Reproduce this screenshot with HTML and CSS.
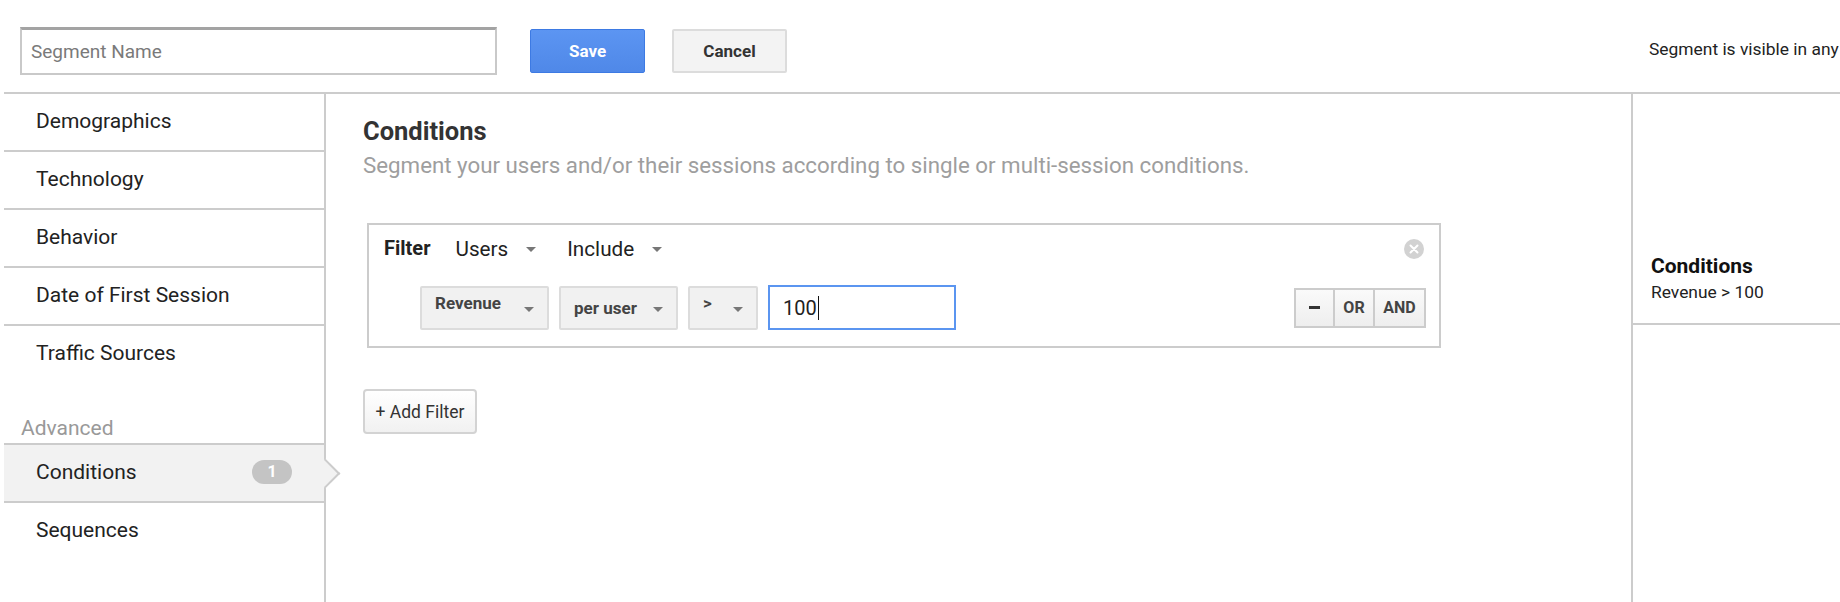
FILE: index.html
```html
<!DOCTYPE html>
<html lang="en">
<head>
  <meta charset="UTF-8">
  <title>Segment editor</title>
  <link rel="stylesheet" href="styles.css">
</head>
<body>
  <header class="topbar">
    <input class="segment-name" type="text" placeholder="Segment Name">
    <button class="btn btn-save">Save</button>
    <button class="btn btn-cancel">Cancel</button>
    <div class="visibility">Segment is visible in any</div>
  </header>

  <div class="layout">
    <!-- левое меню -->
    <nav class="sidebar">
      <div class="nav-item">Demographics</div>
      <div class="nav-item">Technology</div>
      <div class="nav-item">Behavior</div>
      <div class="nav-item">Date of First Session</div>
      <div class="nav-item last">Traffic Sources</div>
      <div class="nav-label">Advanced</div>
      <div class="nav-item active">Conditions <span class="badge">1</span></div>
      <div class="nav-item last">Sequences</div>
    </nav>

    <!-- условия -->
    <main class="content">
      <h2 class="title">Conditions</h2>
      <p class="subtitle">Segment your users and/or their sessions according to single or multi-session conditions.</p>

      <div class="filter">
        <div class="filter-head">
          <b class="filter-label">Filter</b>
          <span class="dropdown">Users <i class="caret"></i></span>
          <span class="dropdown">Include <i class="caret"></i></span>
          <svg class="remove" width="20" height="20" viewBox="0 0 20 20">
            <circle cx="10" cy="10" r="10" fill="#d2d2d2"/>
            <path d="M6.5 6.5 L13.5 13.5 M13.5 6.5 L6.5 13.5" stroke="#fff" stroke-width="2" stroke-linecap="round"/>
          </svg>
        </div>
        <div class="filter-row">
          <span class="select sel-revenue"><span class="up">Revenue</span> <i class="caret"></i></span>
          <span class="select sel-per">per user <i class="caret"></i></span>
          <span class="select sel-op"><span class="up">&gt;</span> <i class="caret"></i></span>
          <div class="value">100<span class="cursor"></span></div>
          <div class="logic">
            <span class="logic-btn minus"><i></i></span>
            <span class="logic-btn or">OR</span>
            <span class="logic-btn and">AND</span>
          </div>
        </div>
      </div>

      <button class="add-filter">+ Add Filter</button>
    </main>

    <!-- сводка -->
    <aside class="summary">
      <div class="summary-block">
        <div class="summary-title">Conditions</div>
        <div class="summary-text">Revenue &gt; 100</div>
      </div>
    </aside>
  </div>
</body>
</html>
```

FILE: styles.css
```css
body {
  margin: 0;
  font-family: Roboto, "Liberation Sans", sans-serif;
  color: #222;
  background: #fff;
  overflow: hidden;
  height: 602px;
}
.topbar {
  height: 82px;
  padding-top: 10px;
  display: flex;
  align-items: center;
  white-space: nowrap;
  overflow: hidden;
}
.topbar > * {
  flex-shrink: 0;
}
.segment-name {
  margin-left: 20px;
  width: 477px;
  height: 48px;
  box-sizing: border-box;
  border: 2px solid #c9c9c9;
  border-top: 3px solid #a3a3a3;
  padding: 0 9px;
  font-family: inherit;
  font-size: 19px;
  color: #333;
  outline: none;
}
.segment-name::placeholder {
  color: #7a7a7a;
}
.btn {
  width: 115px;
  height: 44px;
  border-radius: 2px;
  font-family: inherit;
  font-weight: bold;
  font-size: 17px;
  cursor: pointer;
}
.btn-save {
  margin-left: 33px;
  background: linear-gradient(#5c95f2, #4f88e8);
  border: 1px solid #3d7ae3;
  color: #fff;
}
.btn-cancel {
  margin-left: 27px;
  background: #f3f3f3;
  border: 2px solid #dcdcdc;
  color: #333;
}
.visibility {
  margin-left: 862px;
  margin-top: -4px;
  font-size: 17.4px;
  color: #222;
}

.layout {
  margin-left: 4px;
  border-top: 2px solid #ccc;
  display: grid;
  grid-template-columns: 322px 1fr 209px;
  height: 508px;
}

.sidebar {
  border-right: 2px solid #ccc;
  position: relative;
}
.nav-item {
  height: 53px;
  padding: 0 32px 3px;
  display: flex;
  align-items: center;
  font-size: 21px;
  color: #222;
  border-bottom: 2px solid #ccc;
  position: relative;
}
.nav-item.last {
  border-bottom: none;
}
.nav-item.active {
  background: #f2f2f2;
  border-top: 2px solid #ccc;
  border-bottom: 2px solid #ccc;
}
.nav-item.active::after {
  content: "";
  position: absolute;
  right: -12px;
  top: 18px;
  width: 19px;
  height: 19px;
  background: #f2f2f2;
  border-top: 2px solid #ccc;
  border-right: 2px solid #ccc;
  transform: rotate(45deg);
  z-index: 2;
}
.nav-label {
  padding: 34px 0 3px 17px;
  line-height: 24px;
  font-size: 21px;
  color: #999;
}
.badge {
  margin-left: auto;
  width: 40px;
  height: 24px;
  border-radius: 12px;
  background: #c4c4c4;
  color: #fff;
  font-weight: bold;
  font-size: 16px;
  line-height: 24px;
  text-align: center;
}

.content {
  padding: 23px 37px 0;
}
.title {
  margin: 0 0 8px;
  font-size: 25.5px;
  line-height: 28px;
  font-weight: bold;
  color: #333;
}
.subtitle {
  margin: 0;
  font-size: 22.3px;
  line-height: 24px;
  color: #9e9e9e;
}
.filter {
  margin: 46px 0 0 4px;
  width: 1074px;
  box-sizing: border-box;
  border: 2px solid #ccc;
  padding: 12px 13px 16px 15px;
}
.filter-head {
  display: flex;
  align-items: center;
  height: 24px;
}
.filter-label {
  font-size: 20px;
  color: #222;
  margin-right: 25px;
  margin-top: -3px;
}
.dropdown {
  font-size: 20.7px;
  color: #222;
  display: flex;
  align-items: center;
  margin-right: 31px;
}
.dropdown .caret {
  margin-left: 18px;
}
.caret {
  display: inline-block;
  width: 0;
  height: 0;
  border-left: 5px solid transparent;
  border-right: 5px solid transparent;
  border-top: 5px solid #777;
}
.remove {
  margin-left: auto;
  margin-right: 2px;
}
.filter-row {
  margin-top: 24px;
  display: flex;
  align-items: center;
  padding-left: 36px;
}
.select {
  height: 44px;
  box-sizing: border-box;
  background: #f1f1f1;
  border: 2px solid #dcdcdc;
  border-radius: 2px;
  display: flex;
  align-items: center;
  justify-content: space-between;
  padding: 0 13px;
  font-size: 17px;
  font-weight: bold;
  color: #444;
  margin-right: 10px;
}
.select .up {
  margin-top: -10px;
}
.select .caret {
  margin-top: 4px;
}
.sel-revenue { width: 129px; }
.sel-per { width: 119px; }
.sel-op { width: 70px; }
.value {
  width: 188px;
  height: 45px;
  box-sizing: border-box;
  border: 2px solid #5b95f0;
  padding: 0 13px;
  font-size: 20px;
  color: #222;
  display: flex;
  align-items: center;
}
.cursor {
  display: inline-block;
  width: 1px;
  height: 24px;
  background: #111;
  margin-left: 1px;
}
.logic {
  margin-left: auto;
  display: flex;
  height: 40px;
}
.logic-btn {
  box-sizing: border-box;
  height: 40px;
  border: 2px solid #ccc;
  background: linear-gradient(#fafafa, #eeeeee);
  display: flex;
  align-items: center;
  justify-content: center;
  font-size: 16px;
  font-weight: bold;
  color: #444;
}
.logic-btn + .logic-btn {
  border-left: none;
}
.minus { width: 41px; }
.minus i {
  width: 11px;
  height: 3px;
  background: #333;
}
.or { width: 40px; }
.and { width: 51px; }

.add-filter {
  margin: 41px 0 0;
  width: 114px;
  height: 45px;
  border: 2px solid #d3d3d3;
  border-radius: 4px;
  background: linear-gradient(#fff, #f1f1f1);
  font-family: inherit;
  font-size: 17.5px;
  color: #333;
  cursor: pointer;
}

.summary {
  border-left: 2px solid #ccc;
}
.summary-block {
  padding: 160px 18px 20px;
  border-bottom: 2px solid #ccc;
}
.summary-title {
  font-size: 21px;
  line-height: 24px;
  font-weight: bold;
  color: #111;
}
.summary-text {
  margin-top: 3px;
  font-size: 17.4px;
  line-height: 22px;
  color: #222;
}
```
